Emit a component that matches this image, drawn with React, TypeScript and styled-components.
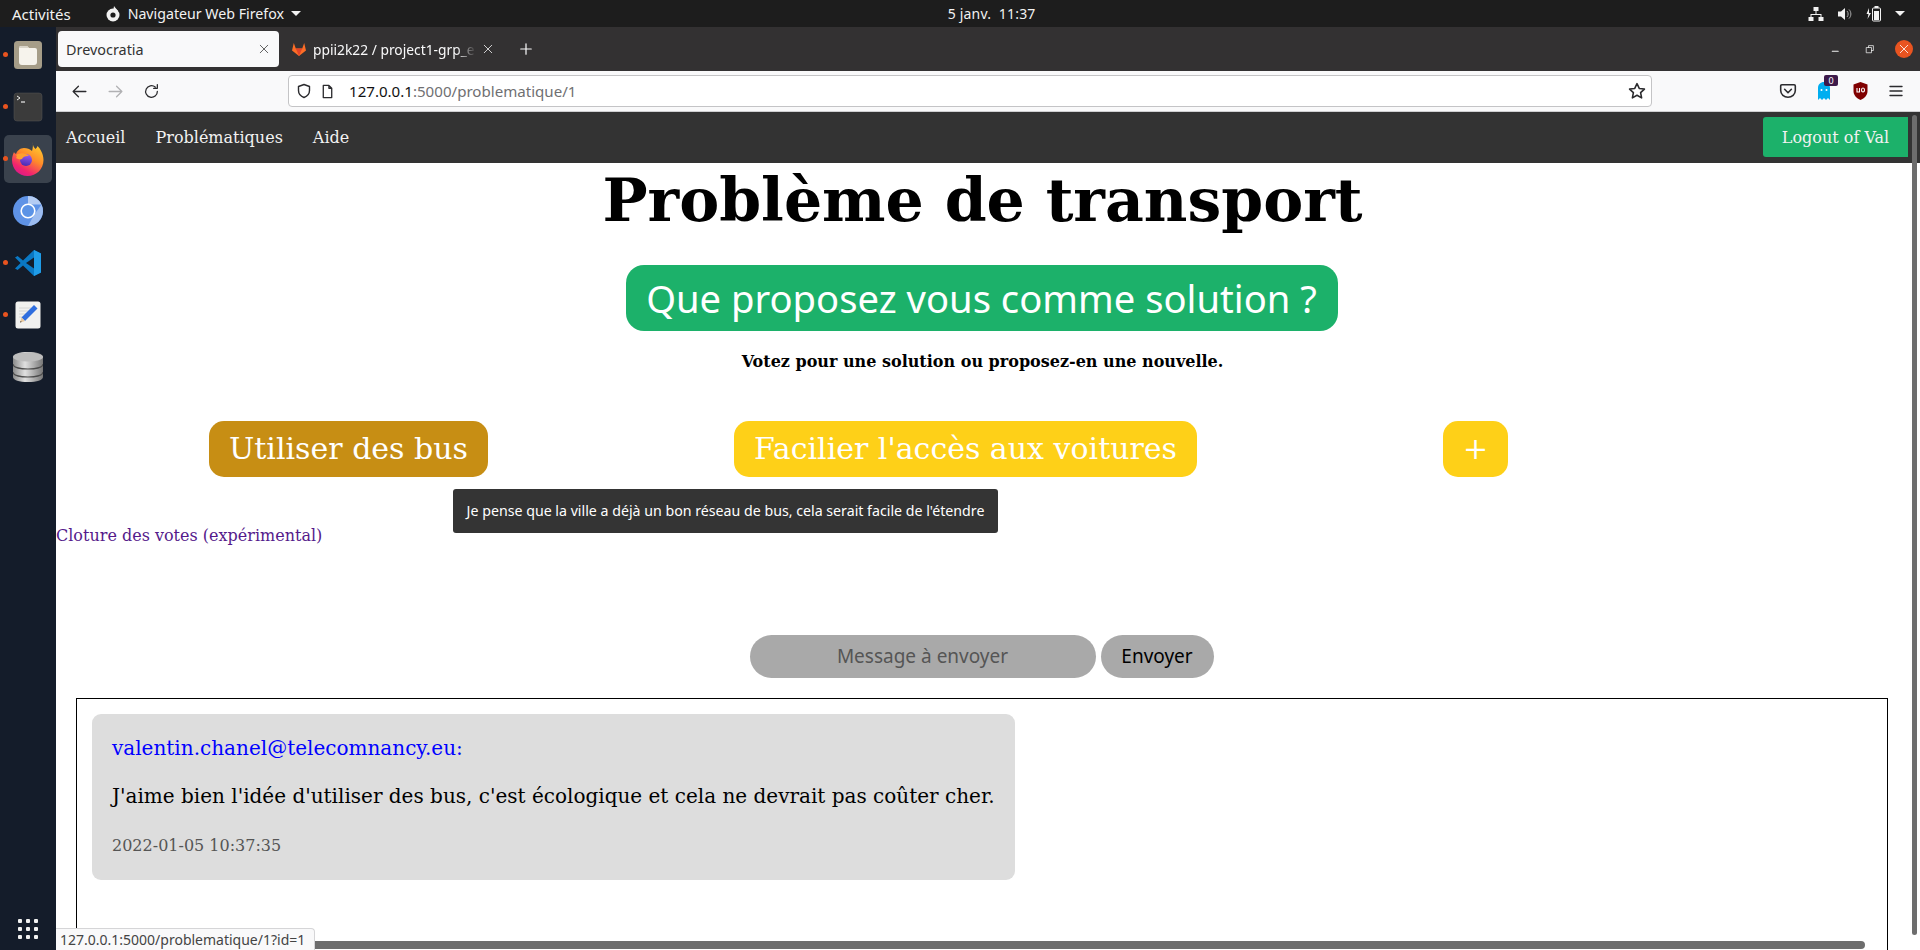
import styled, { createGlobalStyle } from "styled-components";
import { ReactNode } from "react";

const ui = `"Noto Sans", "Open Sans", sans-serif`;
const serif = `"DejaVu Serif", serif`;

const GlobalStyle = createGlobalStyle`
  html, body { margin: 0; padding: 0; height: 100%; overflow: hidden; background: #fff; }
  #root { height: 100%; }
  * { box-sizing: border-box; }
`;

const Screen = styled.div`
  width: 1920px;
  height: 950px;
  display: flex;
  flex-direction: column;
  overflow: hidden;
`;

// gnome top bar
const TopBar = styled.div`
  height: 27px;
  flex: none;
  background: #1d1d1d;
  color: #f2f2f2;
  font: 15px ${ui};
  display: flex;
  align-items: center;
  padding: 0 12px;
`;

const BarText = styled.span`
  white-space: nowrap;
`;

const AppMenu = styled.div`
  display: flex;
  align-items: center;
  gap: 7px;
  margin-left: 34px;
  width: 843px;
  font-size: 14.2px;
`;

const Caret = styled.span`
  width: 0;
  height: 0;
  border-left: 5px solid transparent;
  border-right: 5px solid transparent;
  border-top: 5px solid #f2f2f2;
`;

const Clock = styled(BarText)`
  font-size: 14px;
  letter-spacing: 0.2px;
`;

const Tray = styled.div`
  margin-left: auto;
  display: flex;
  align-items: center;
  gap: 13px;
  padding-right: 3px;
`;

const Desktop = styled.div`
  flex: 1;
  min-height: 0;
  display: flex;
`;

const Dock = styled.div`
  width: 56px;
  flex: none;
  background: #141c2a;
  display: flex;
  flex-direction: column;
  align-items: center;
  gap: 4px;
  padding: 4px 0 3px;
`;

const DockItem = styled.div<{ $active?: boolean }>`
  position: relative;
  width: 48px;
  height: 48px;
  border-radius: 5px;
  display: flex;
  align-items: center;
  justify-content: center;
  background: ${(p) => (p.$active ? "#3a424d" : "transparent")};
`;

const RunDot = styled.span`
  position: absolute;
  left: -1px;
  top: 21px;
  width: 5px;
  height: 5px;
  border-radius: 50%;
  background: #e9541f;
`;

const DockGrid = styled.div`
  margin-top: auto;
  display: grid;
  grid-template-columns: repeat(3, 4px);
  gap: 4px;
  padding: 8px 0 8px;
  & > span {
    width: 4px;
    height: 4px;
    background: #f2f2f2;
    border-radius: 1px;
  }
`;

const Browser = styled.div`
  flex: 1;
  min-width: 0;
  display: flex;
  flex-direction: column;
`;

const TabStrip = styled.div`
  height: 44px;
  flex: none;
  background: #333132;
  display: flex;
  align-items: flex-start;
  padding: 4px 0 0 2px;
  color: #f9f9fa;
  font: 14.4px ${ui};
`;

const ActiveTab = styled.div`
  width: 221px;
  height: 36px;
  background: #f9f9fa;
  color: #333;
  border-radius: 4px;
  display: flex;
  align-items: center;
  padding: 0 9px 0 8px;
  justify-content: space-between;
`;

const Tab = styled.div`
  width: 221px;
  height: 36px;
  display: flex;
  align-items: center;
  gap: 6px;
  padding: 0 6px 0 12px;
`;

const TabTitle = styled.span`
  flex: 1;
  min-width: 0;
  font-size: 13.8px;
  white-space: nowrap;
  overflow: hidden;
  -webkit-mask-image: linear-gradient(to right, #000 88%, transparent);
  mask-image: linear-gradient(to right, #000 88%, transparent);
`;

const NewTab = styled.div`
  width: 36px;
  height: 36px;
  margin-left: 8px;
  display: flex;
  align-items: center;
  justify-content: center;
`;

const WindowButtons = styled.div`
  margin-left: auto;
  display: flex;
  align-items: center;
  gap: 16px;
  height: 36px;
  padding-right: 0;
`;

const WindowButton = styled.div<{ $close?: boolean }>`
  width: 18px;
  height: 18px;
  display: flex;
  align-items: center;
  justify-content: center;
  border-radius: 50%;
  background: ${(p) => (p.$close ? "#e95420" : "transparent")};
  margin-right: ${(p) => (p.$close ? "7px" : "0")};
`;

const Toolbar = styled.div`
  height: 41px;
  flex: none;
  background: #f9f9fa;
  border-bottom: 1px solid #cfcfd1;
  display: flex;
  align-items: center;
  padding: 0 0 0 15px;
`;

const ToolGroup = styled.div`
  display: flex;
  align-items: center;
  gap: 19px;
  width: 217px;
`;

const UrlBar = styled.div`
  width: 1364px;
  height: 32px;
  background: #fff;
  border: 1px solid #c4c4c6;
  border-radius: 4px;
  display: flex;
  align-items: center;
  padding: 0 5px 0 7px;
  font: 15.1px ${ui};
`;

const PageGlyph = styled.div`
  margin-left: 5px;
  display: flex;
`;

const UrlHost = styled.span`
  color: #111;
  margin-left: 12px;
`;

const UrlPath = styled.span`
  color: #6f6f72;
`;

const UrlEnd = styled.div`
  margin-left: auto;
  display: flex;
`;

const ToolRight = styled.div`
  margin-left: 126px;
  display: flex;
  align-items: center;
  gap: 16px;
`;

const ToolIcon = styled.div`
  position: relative;
  width: 20px;
  height: 20px;
  display: flex;
  align-items: center;
  justify-content: center;
`;

const CountBadge = styled.span`
  position: absolute;
  right: -4px;
  top: -6px;
  width: 14px;
  height: 11px;
  background: #3d1a4a;
  color: #fff;
  border-radius: 2px;
  font: 9px/11px ${ui};
  text-align: center;
`;

// the page itself
const Page = styled.div`
  position: relative;
  flex: 1;
  min-height: 0;
  overflow: hidden;
  background: #fff;
  font-family: ${serif};
`;

const NavBar = styled.nav`
  height: 51px;
  background: #333;
  display: flex;
  align-items: center;
  padding: 0 12px 0 10px;
`;

const NavLink = styled.a`
  color: #f2f2f2;
  font-size: 16px;
  margin-right: 30px;
  text-decoration: none;
  white-space: nowrap;
`;

const LogoutButton = styled.a`
  margin-left: auto;
  width: 145px;
  height: 40px;
  margin-top: -1px;
  background: #1cb16a;
  color: #f2f2f2;
  border-radius: 3px 0 0 3px;
  font-size: 16px;
  display: flex;
  align-items: center;
  justify-content: center;
`;

const Content = styled.div`
  width: 1853px;
  display: flex;
  flex-direction: column;
`;

const Heading = styled.h1`
  margin: 0;
  font-size: 60px;
  line-height: 75px;
  font-weight: 700;
  color: #000;
  text-align: center;
`;

const PromptPill = styled.div`
  align-self: center;
  margin: 27px 2px 0 0;
  height: 66px;
  width: 712px;
  border-radius: 18px;
  background: #1cb16a;
  color: #fff;
  font: 38.2px/66px ${ui};
  text-align: center;
  white-space: nowrap;
`;

const Hint = styled.p`
  margin: 21px 0 0;
  font-size: 16px;
  line-height: 19px;
  font-weight: 700;
  text-align: center;
  color: #000;
`;

const Choices = styled.div`
  display: flex;
  gap: 246px;
  margin-top: 50px;
  padding-left: 153px;
`;

const Choice = styled.a<{ $pressed?: boolean }>`
  height: 56px;
  padding: 0 20px;
  border-radius: 15px;
  background: ${(p) => (p.$pressed ? "#c78e14" : "#fed018")};
  color: #fff;
  font-size: 30px;
  line-height: 56px;
  white-space: nowrap;
`;

const CloseLink = styled.a`
  margin-top: 49px;
  font-size: 16px;
  line-height: 19px;
  color: #551a8b;
`;

const Tooltip = styled.div`
  position: absolute;
  left: 397px;
  top: 377px;
  width: 545px;
  height: 44px;
  background: #343434;
  color: #fff;
  border-radius: 3px;
  font: 14.2px/44px ${ui};
  text-align: center;
  white-space: nowrap;
`;

const MessageForm = styled.form`
  display: flex;
  justify-content: center;
  gap: 5px;
  margin: 90px 2px 0 0;
`;

const MessageInput = styled.div`
  width: 346px;
  height: 43px;
  border-radius: 22px;
  background: #a9a9a9;
  color: #555;
  font: 19px/43px ${ui};
  text-align: center;
`;

const SendButton = styled.div`
  width: 113px;
  height: 43px;
  border-radius: 22px;
  background: #a9a9a9;
  color: #000;
  font: 19px/43px ${ui};
  text-align: center;
`;

const ChatBox = styled.div`
  margin: 20px 0 0 20px;
  width: 1812px;
  height: 300px;
  border: 1px solid #000;
  padding: 15px;
`;

const Bubble = styled.div`
  width: 923px;
  height: 166px;
  background: #ddd;
  border-radius: 9px;
  padding: 22px 20px 0;
`;

const Sender = styled.div`
  color: #0000ff;
  font-size: 20px;
  line-height: 24px;
  white-space: nowrap;
`;

const Body = styled.div`
  margin-top: 24px;
  color: #000;
  font-size: 20px;
  line-height: 24px;
  white-space: nowrap;
`;

const Stamp = styled.div`
  margin-top: 26px;
  color: #555;
  font-size: 16px;
  line-height: 24px;
`;

const StatusTip = styled.div`
  position: absolute;
  left: 0;
  bottom: 0;
  width: 259px;
  height: 22px;
  background: #f9f9fa;
  border: 1px solid #d5d5d7;
  border-left: none;
  border-bottom: none;
  border-radius: 0 4px 0 0;
  color: #444;
  font: 14px/21px ${ui};
  padding-left: 4px;
  white-space: nowrap;
`;

const HScroll = styled.div`
  position: absolute;
  left: 259px;
  bottom: 1px;
  width: 1550px;
  height: 8px;
  background: #6d6d6d;
  border-radius: 0 4px 4px 0;
`;

const VScroll = styled.div`
  position: absolute;
  right: 3px;
  top: 3px;
  width: 5px;
  height: 820px;
  background: #6d6d6d;
  border-radius: 3px;
`;

const Stroke = ({ children, size = 16, color = "#2b2b2e", w = 1.4 }: { children: ReactNode; size?: number; color?: string; w?: number }) => (
  <svg width={size} height={size} viewBox="0 0 16 16" fill="none" stroke={color} strokeWidth={w} strokeLinecap="round" strokeLinejoin="round">
    {children}
  </svg>
);

const FilesIcon = () => (
  <svg width="30" height="30" viewBox="0 0 30 30">
    <rect x="1" y="1" width="28" height="28" rx="3.500" fill="#a69d88" />
    <path d="M6 8a2 2 0 0 1 2-2h6l2 2h6a2 2 0 0 1 2 2v12a3 3 0 0 1-3 3H9a3 3 0 0 1-3-3z" fill="#f6f3ec" />
    <path d="M6 8a2 2 0 0 1 2-2h6l2 2H6z" fill="#d9d4c8" />
  </svg>
);

const TerminalIcon = () => (
  <svg width="30" height="30" viewBox="0 0 30 30">
    <rect x="1" y="1" width="28" height="28" rx="3" fill="#3b3b3b" stroke="#555" strokeWidth="0.500" />
    <path d="M4 4l3 2-3 2" fill="none" stroke="#eee" strokeWidth="1" />
    <path d="M8 10h4" stroke="#eee" strokeWidth="1.200" />
  </svg>
);

const FirefoxIcon = () => (
  <svg width="32" height="34" viewBox="0 0 32 34">
    <defs>
      <linearGradient id="ffBody" x1="0.8" y1="0" x2="0.25" y2="1">
        <stop offset="0" stopColor="#ffd52e" />
        <stop offset="0.45" stopColor="#ff8a2a" />
        <stop offset="0.8" stopColor="#f2246e" />
        <stop offset="1" stopColor="#d91a8c" />
      </linearGradient>
      <linearGradient id="ffCore" x1="0.6" y1="0" x2="0.4" y2="1">
        <stop offset="0" stopColor="#9a5cf5" />
        <stop offset="1" stopColor="#4a2ab0" />
      </linearGradient>
    </defs>
    <path d="M21 0c-.5 3 .5 5 2.500 7 1-1 1.500-1.500 2-3 3 3 6 8 6 14 0 9-7 16-16 16S0 27 0 18c0-3 1-6 2-8 .5 1 1 1.500 2 2 1-3 4-6 8-6 3 0 6 1 8 3 1-3 1-6 1-9z" fill="url(#ffBody)" />
    <circle cx="14" cy="18" r="6" fill="url(#ffCore)" />
    <path d="M4 13c3-2 9-3 13 1-3-.5-6 .5-7 3-2 1-4 0-6-1 1-1 1-2 0-3z" fill="#ffa02e" />
  </svg>
);

const ChromiumIcon = () => (
  <svg width="30" height="30" viewBox="0 0 30 30">
    <circle cx="15" cy="15" r="15" fill="#5f93e6" />
    <path d="M15 0a15 15 0 0 1 13.500 8.500H15z" fill="#b4ccf3" />
    <path d="M28.500 8.500A15 15 0 0 1 15 30l6-11z" fill="#9cbcf0" />
    <circle cx="15" cy="15" r="6.800" fill="#5b93e6" stroke="#fff" strokeWidth="1.600" />
  </svg>
);

const CodeIcon = () => (
  <svg width="28" height="28" viewBox="0 0 28 28">
    <path d="M20 1l7 3.400v19.200L20 27 9 16.600 3.600 21 1 19.600 6.600 14 1 8.400 3.600 7 9 11.400z" fill="#0a78c4" />
    <path d="M20 1l7 3.400v19.200L20 27z" fill="#1f9ce8" />
    <path d="M20 8.500L12 14l8 5.500z" fill="#141c2a" />
  </svg>
);

const EditorIcon = () => (
  <svg width="26" height="28" viewBox="0 0 26 28">
    <rect x="0.500" y="0.500" width="25" height="27" rx="2.500" fill="#f1f1ef" />
    <path d="M4 7h12M4 10h10M4 13h8M4 16h6" stroke="#d0d0cf" strokeWidth="0.800" />
    <path d="M19 4l3.500 3.500L10 20l-3.500-3.500z" fill="#2f6ede" />
    <path d="M6.500 16.500L10 20l-5 1.500z" fill="#e8c79a" />
    <path d="M5.800 20L5 21.500 6.600 21z" fill="#222" />
  </svg>
);

const DbIcon = () => (
  <svg width="30" height="30" viewBox="0 0 30 30">
    <defs>
      <linearGradient id="dbG" x1="0" y1="0" x2="1" y2="0">
        <stop offset="0" stopColor="#8a8a8a" />
        <stop offset="0.4" stopColor="#e0e0e0" />
        <stop offset="1" stopColor="#777" />
      </linearGradient>
    </defs>
    <path d="M0 5c0-3 6-5 15-5s15 2 15 5v20c0 3-6 5-15 5S0 28 0 25z" fill="url(#dbG)" />
    <ellipse cx="15" cy="5" rx="15" ry="4.600" fill="#bdbdbd" />
    <path d="M0 12c0 3 6 5 15 5s15-2 15-5M0 20c0 3 6 5 15 5s15-2 15-5" fill="none" stroke="#4c4c4c" strokeWidth="1.200" />
  </svg>
);

const dockApps = [
  { key: "files", icon: <FilesIcon />, running: true },
  { key: "term", icon: <TerminalIcon />, running: true },
  { key: "firefox", icon: <FirefoxIcon />, running: true, active: true },
  { key: "chromium", icon: <ChromiumIcon /> },
  { key: "code", icon: <CodeIcon />, running: true },
  { key: "editor", icon: <EditorIcon />, running: true },
  { key: "db", icon: <DbIcon /> },
];

const CloseGlyph = ({ color = "#444" }: { color?: string }) => (
  <Stroke size={12} color={color} w={1.1}>
    <path d="M3 3l10 10M13 3L3 13" />
  </Stroke>
);

export default function App() {
  return (
    <Screen>
      <GlobalStyle />
      <TopBar>
        <BarText>Activités</BarText>
        <AppMenu>
          <svg width="16" height="16" viewBox="0 0 16 16">
            <circle cx="8" cy="9" r="6.500" fill="#f2f2f2" />
            <circle cx="8" cy="9" r="2.600" fill="#1d1d1d" />
            <path d="M9 0c1 2 3 3 4 5L8 6z" fill="#f2f2f2" />
          </svg>
          <BarText>Navigateur Web Firefox</BarText>
          <Caret />
        </AppMenu>
        <Clock>5 janv.&nbsp;&nbsp;11:37</Clock>
        <Tray>
          <svg width="16" height="16" viewBox="0 0 16 16" fill="#f2f2f2">
            <rect x="5.500" y="1" width="5" height="4" />
            <rect x="0.500" y="11" width="5" height="4" />
            <rect x="10.500" y="11" width="5" height="4" />
            <path d="M7.500 5h1v3h5v3h-1V9H3.500v2h-1V8h5z" />
          </svg>
          <svg width="16" height="16" viewBox="0 0 16 16" fill="#f2f2f2">
            <path d="M1 5.500h3L8 2v12l-4-3.500H1z" />
            <path d="M10 5c1.500 1.500 1.500 4.500 0 6M12 3.500c2.500 2.500 2.500 6.500 0 9" fill="none" stroke="#aaa" strokeWidth="1" />
          </svg>
          <svg width="16" height="18" viewBox="0 0 16 18" fill="#f2f2f2">
            <path d="M3 3L0.500 9h2L1.500 14 5 8H3z" />
            <rect x="6.500" y="3" width="8" height="13" rx="1" fill="none" stroke="#f2f2f2" />
            <rect x="8.500" y="1" width="4" height="2" />
            <rect x="8" y="6" width="5" height="9" />
          </svg>
          <Caret />
        </Tray>
      </TopBar>
      <Desktop>
        <Dock>
          {dockApps.map((app) => (
            <DockItem key={app.key} $active={app.active}>
              {app.running && <RunDot />}
              {app.icon}
            </DockItem>
          ))}
          <DockGrid>
            {Array.from({ length: 9 }).map((_, i) => (
              <span key={i} />
            ))}
          </DockGrid>
        </Dock>
        <Browser>
          <TabStrip>
            <ActiveTab>
              Drevocratia
              <CloseGlyph />
            </ActiveTab>
            <Tab>
              <svg width="16" height="16" viewBox="0 0 16 16">
                <path d="M8 15L1 9.500 2.800 2l2 5.500h6.400L13.200 2 15 9.500z" fill="#fc6d26" />
                <path d="M8 15L4.800 7.500h6.400z" fill="#e24329" />
              </svg>
              <TabTitle>ppii2k22 / project1-grp_e</TabTitle>
              <CloseGlyph color="#f0f0f0" />
            </Tab>
            <NewTab>
              <Stroke size={14} color="#f9f9fa">
                <path d="M8 2v12M2 8h12" />
              </Stroke>
            </NewTab>
            <WindowButtons>
              <WindowButton>
                <Stroke size={12} color="#f2f2f2"><path d="M3 11h8" /></Stroke>
              </WindowButton>
              <WindowButton>
                <Stroke size={12} color="#f2f2f2" w={1}><path d="M3.500 6h6.500v7H3.500zM6 6V3.500h6.500V10H10" /></Stroke>
              </WindowButton>
              <WindowButton $close>
                <CloseGlyph color="#fff" />
              </WindowButton>
            </WindowButtons>
          </TabStrip>
          <Toolbar>
            <ToolGroup>
              <Stroke size={17} w={1.2}><path d="M14 8H2M7 3L2 8l5 5" /></Stroke>
              <Stroke size={17} color="#b1b1b3" w={1.2}><path d="M2 8h12M9 3l5 5-5 5" /></Stroke>
              <Stroke size={17} w={1.2}><path d="M13.500 8A5.500 5.500 0 1 1 11.500 3.800M13.500 1.500v3.500H10" /></Stroke>
            </ToolGroup>
            <UrlBar>
              <Stroke size={16}><path d="M8 1.500l5.500 2v4c0 3.500-2.500 5.800-5.500 7-3-1.200-5.500-3.500-5.500-7v-4z" /></Stroke>
              <PageGlyph>
                <ToolIcon>
                  <Stroke size={15}><path d="M3.500 1.500h6l3 3v10h-9zM9.500 1.500v3h3" /></Stroke>
                </ToolIcon>
              </PageGlyph>
              <UrlHost>127.0.0.1</UrlHost>
              <UrlPath>:5000/problematique/1</UrlPath>
              <UrlEnd>
                <Stroke size={18}><path d="M8 1.500l2 4.200 4.600.6-3.400 3.200.9 4.600L8 11.800l-4.100 2.300.9-4.600L1.400 6.300 6 5.700z" /></Stroke>
              </UrlEnd>
            </UrlBar>
            <ToolRight>
              <ToolIcon>
                <Stroke size={18}><path d="M2.500 2.500h11c.6 0 1 .4 1 1v4c0 3.500-3 6-6.500 6s-6.500-2.500-6.500-6v-4c0-.6.4-1 1-1zM5 6.500l3 3 3-3" /></Stroke>
              </ToolIcon>
              <ToolIcon>
                <svg width="14" height="20" viewBox="0 0 14 20">
                  <path d="M7 1c3.500 0 6 2.500 6 6v12l-2-2-2 2-2-2-2 2-2-2-2 2V7c0-3.500 2.500-6 6-6z" fill="#00aef0" />
                  <circle cx="4.500" cy="9" r="1" fill="#fff" />
                  <circle cx="9.500" cy="9" r="1" fill="#fff" />
                </svg>
                <CountBadge>0</CountBadge>
              </ToolIcon>
              <ToolIcon>
                <svg width="15" height="18" viewBox="0 0 15 18">
                  <path d="M7.500 0l7 2.500V9c0 4-3 7.500-7 9-4-1.500-7-5-7-9V2.500z" fill="#800000" />
                  <path d="M4 6v4h2.500V6M8.500 8a1.500 2 0 1 0 3 0 1.500 2 0 1 0-3 0" fill="none" stroke="#fff" strokeWidth="1.100" />
                </svg>
              </ToolIcon>
              <ToolIcon>
                <Stroke size={16}><path d="M2 3.500h12M2 8h12M2 12.500h12" /></Stroke>
              </ToolIcon>
            </ToolRight>
          </Toolbar>
          <Page>
            <NavBar>
              <NavLink>Accueil</NavLink>
              <NavLink>Problématiques</NavLink>
              <NavLink>Aide</NavLink>
              <LogoutButton>Logout of Val</LogoutButton>
            </NavBar>
            <Content>
              <Heading>Problème de transport</Heading>
              <PromptPill>Que proposez vous comme solution ?</PromptPill>
              <Hint>Votez pour une solution ou proposez-en une nouvelle.</Hint>
              <Choices>
                <Choice $pressed>Utiliser des bus</Choice>
                <Choice>Facilier l'accès aux voitures</Choice>
                <Choice>+</Choice>
              </Choices>
              <CloseLink>Cloture des votes (expérimental)</CloseLink>
              <MessageForm>
                <MessageInput>Message à envoyer</MessageInput>
                <SendButton>Envoyer</SendButton>
              </MessageForm>
              <ChatBox>
                <Bubble>
                  <Sender>valentin.chanel@telecomnancy.eu:</Sender>
                  <Body>J'aime bien l'idée d'utiliser des bus, c'est écologique et cela ne devrait pas coûter cher.</Body>
                  <Stamp>2022-01-05 10:37:35</Stamp>
                </Bubble>
              </ChatBox>
            </Content>
            <Tooltip>Je pense que la ville a déjà un bon réseau de bus, cela serait facile de l'étendre</Tooltip>
            <VScroll />
            <HScroll />
            <StatusTip>127.0.0.1:5000/problematique/1?id=1</StatusTip>
          </Page>
        </Browser>
      </Desktop>
    </Screen>
  );
}
